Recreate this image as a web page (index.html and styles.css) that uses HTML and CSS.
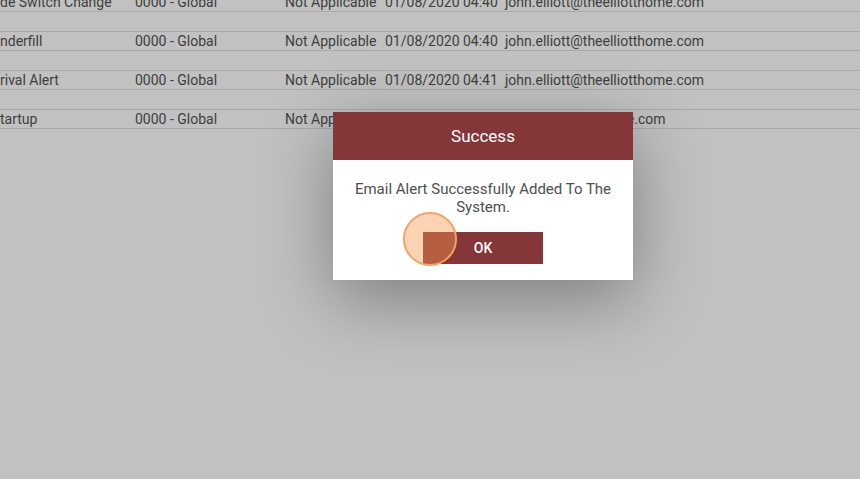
FILE: index.html
```html
<!DOCTYPE html>
<html lang="en">
<head>
    <meta charset="UTF-8">
    <meta name="viewport" content="width=device-width, initial-scale=1.0">
    <title>Email Alerts</title>
    <link rel="stylesheet" href="styles.css">
</head>
<body>
    <div class="alerts">
        <div class="row">
            <span class="col name">de Switch Change</span>
            <span class="col site">0000 - Global</span>
            <span class="col scope">Not Applicable</span>
            <span class="col date">01/08/2020 04:40</span>
            <span class="col user">john.elliott@theelliotthome.com</span>
        </div>
        <div class="spacer"></div>
        <div class="row">
            <span class="col name">nderfill</span>
            <span class="col site">0000 - Global</span>
            <span class="col scope">Not Applicable</span>
            <span class="col date">01/08/2020 04:40</span>
            <span class="col user">john.elliott@theelliotthome.com</span>
        </div>
        <div class="spacer"></div>
        <div class="row">
            <span class="col name">rival Alert</span>
            <span class="col site">0000 - Global</span>
            <span class="col scope">Not Applicable</span>
            <span class="col date">01/08/2020 04:41</span>
            <span class="col user">john.elliott@theelliotthome.com</span>
        </div>
        <div class="spacer"></div>
        <div class="row">
            <span class="col name">tartup</span>
            <span class="col site">0000 - Global</span>
            <span class="col scope">Not Applicable</span>
            <span class="col date">01/08/2020 04:41</span>
            <span class="col user">john@theelliotthome.com</span>
        </div>
    </div>

    <div class="modal">
        <div class="modal-header">Success</div>
        <div class="modal-body">
            <p>Email Alert Successfully Added To The System.</p>
            <div class="actions">
                <button class="btn-ok">OK</button>
                <span class="click-mark"></span>
            </div>
        </div>
    </div>
</body>
</html>
```

FILE: styles.css
```css
html, body {
    height: 100%;
}
body {
    margin: 0;
    overflow: hidden;
    background-color: #c1c1c1;
    font-family: Roboto, 'Liberation Sans', sans-serif;
    font-size: 14px;
    color: #3e3e3e;
}
.alerts {
    margin-top: -7px;
}
.row {
    display: flex;
    align-items: center;
    height: 18px;
    border-bottom: 1px solid #a9a9a9;
    white-space: nowrap;
}
.spacer {
    height: 19px;
    border-bottom: 1px solid #a9a9a9;
}
.col {
    display: block;
    line-height: 18px;
}
.name {
    width: 135px;
}
.site {
    width: 150px;
}
.scope {
    width: 100px;
}
.date {
    width: 120px;
}
.modal {
    position: absolute;
    left: 333px;
    top: 112px;
    width: 300px;
    height: 168px;
    background-color: #fff;
    box-shadow: 0 20px 70px rgba(0,0,0,0.35);
}
.modal-header {
    height: 48px;
    line-height: 48px;
    background-color: #843638;
    color: #fff;
    text-align: center;
    font-size: 17px;
}
.modal-body {
    padding: 20px 16px 0;
    text-align: center;
}
.modal-body p {
    margin: 0;
    line-height: 18px;
    color: #4f4f4f;
    font-size: 15px;
}
.actions {
    position: relative;
    margin-top: 16px;
    display: flex;
    justify-content: center;
}
.btn-ok {
    width: 120px;
    height: 32px;
    border: none;
    background-color: #843638;
    color: #fff;
    font-family: Roboto, 'Liberation Sans', sans-serif;
    font-size: 14px;
    font-weight: 500;
    cursor: pointer;
}
.click-mark {
    position: absolute;
    left: 54px;
    top: -20px;
    width: 50px;
    height: 50px;
    border: 2px solid #f5a262;
    border-radius: 50%;
    background-color: rgba(250, 150, 80, 0.42);
}
```
